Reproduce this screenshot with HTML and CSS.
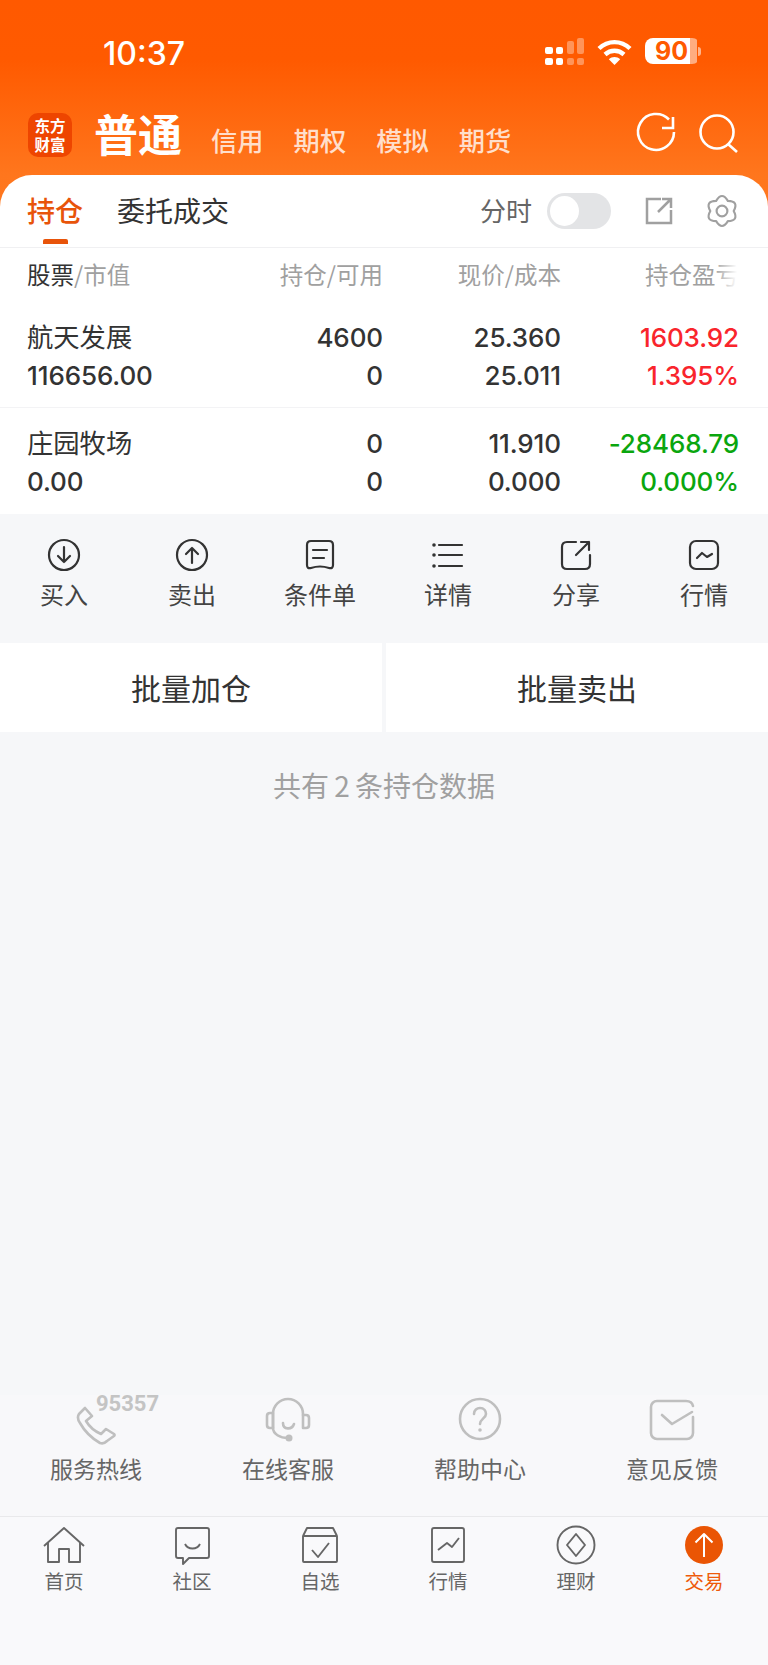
FILE: index.html
```html
<!DOCTYPE html>
<html lang="zh-CN">
<head>
<meta charset="utf-8">
<title>交易</title>
<link rel="stylesheet" href="styles.css">
</head>
<body>
<div class="screen">
  <header class="top">
    <div class="status">
      <span class="time">10:37</span>
      <div class="status-right">
        <svg class="signal" width="39" height="27" viewBox="0 0 39 27" fill="#fff">
          <rect x="0" y="9" width="8" height="7" rx="2"/><rect x="11" y="9" width="7" height="7" rx="2"/>
          <rect x="0" y="20" width="8" height="7" rx="2"/><rect x="11" y="20" width="7" height="7" rx="2"/>
          <g opacity=".35"><rect x="22" y="3" width="7" height="13" rx="2"/><rect x="32" y="0" width="7" height="16" rx="2"/>
          <rect x="22" y="20" width="7" height="7" rx="2"/><rect x="32" y="20" width="7" height="7" rx="2"/></g>
        </svg>
        <svg class="wifi" width="35" height="26" viewBox="0 0 35 26" fill="none" stroke="#fff" stroke-width="4.4">
          <path d="M2 9.5C11 1 24 1 33 9.5"/><path d="M8 15.5C13.500 10.500 21.500 10.500 27 15.500"/>
          <path d="M17.500 26L11.800 20.300C15 17.300 20 17.300 23.200 20.300Z" fill="#fff" stroke="none"/>
        </svg>
        <div class="battery"><span class="battery-num">90</span></div>
      </div>
    </div>
    <nav class="nav">
      <div class="logo">东方<br>财富</div>
      <div class="title">普通</div>
      <div class="nav-tabs"><span>信用</span><span>期权</span><span>模拟</span><span>期货</span></div>
      <div class="nav-icons">
        <svg width="44" height="44" viewBox="0 0 44 44" fill="none" stroke="#fff" stroke-width="2.6"><path d="M35 9.500A18 18 0 1 0 40 22"/><path d="M39 7V18H28"/></svg>
        <svg width="44" height="44" viewBox="0 0 44 44" fill="none" stroke="#fff" stroke-width="2.6"><circle cx="21" cy="22" r="16.500"/><path d="M32 34L41 42"/></svg>
      </div>
    </nav>
    <div class="tabs">
      <span class="tab tab-active">持仓</span>
      <span class="tab">委托成交</span>
      <span class="fenshi">分时</span>
      <div class="toggle"><span class="knob"></span></div>
      <svg class="tool-share" width="30" height="30" viewBox="0 0 30 30" fill="none" stroke="#a0a0a0" stroke-width="2.500"><path d="M17 3H3V27H27V14"/><path d="M14 16L27 3M18 3H27V12"/></svg>
      <svg class="tool-gear" width="36" height="36" viewBox="0 0 40 40" fill="none" stroke="#a0a0a0" stroke-width="2.400" stroke-linejoin="round"><path d="M26.500 8.700Q20 -2 13.500 8.700Q1 9 7 20Q1 31 13.500 31.300Q20 42 26.500 31.300Q39 31 33 20Q39 9 26.500 8.700Z"/><circle cx="20" cy="20" r="6"/></svg>
    </div>
  </header>

  <section class="table">
    <div class="grid head">
      <div><span class="dark">股票</span>/市值</div>
      <div class="r">持仓/可用</div>
      <div class="r">现价/成本</div>
      <div class="r">持仓盈亏</div>
      <span class="fade"></span>
    </div>
    <div class="grid row">
      <div class="name">航天发展</div><div class="r">4600</div><div class="r">25.360</div><div class="r red">1603.92</div>
      <div>116656.00</div><div class="r">0</div><div class="r">25.011</div><div class="r red">1.395%</div>
    </div>
    <div class="grid row">
      <div class="name">庄园牧场</div><div class="r">0</div><div class="r">11.910</div><div class="r green">-28468.79</div>
      <div>0.00</div><div class="r">0</div><div class="r">0.000</div><div class="r green">0.000%</div>
    </div>
  </section>

  <section class="actions">
    <div class="action">
      <svg width="40" height="36" viewBox="0 0 40 36"><circle cx="20" cy="18" r="15"/><path d="M20 10V25M14 19L20 25L26 19"/></svg>
      <span>买入</span>
    </div>
    <div class="action">
      <svg width="40" height="36" viewBox="0 0 40 36"><circle cx="20" cy="18" r="15"/><path d="M20 26V11M14 17L20 11L26 17"/></svg>
      <span>卖出</span>
    </div>
    <div class="action">
      <svg width="40" height="36" viewBox="0 0 40 36"><path d="M11 4H29Q33 4 33 8V28Q33 32 29 31Q20 28 11 31Q7 32 7 28V8Q7 4 11 4Z"/><path d="M13 13H27M13 21H24"/></svg>
      <span>条件单</span>
    </div>
    <div class="action">
      <svg width="40" height="36" viewBox="0 0 40 36"><path d="M11 8H34M11 18H34M11 29H34"/><circle class="dot" cx="6" cy="8" r="1.800"/><circle class="dot" cx="6" cy="18" r="1.800"/><circle class="dot" cx="6" cy="29" r="1.800"/></svg>
      <span>详情</span>
    </div>
    <div class="action">
      <svg width="40" height="36" viewBox="0 0 40 36"><path d="M20 5H11Q6 5 6 10V27Q6 32 11 32H29Q34 32 34 27V18"/><path d="M20 18L33 5M25 5H33V13"/></svg>
      <span>分享</span>
    </div>
    <div class="action">
      <svg width="40" height="36" viewBox="0 0 40 36"><rect x="6" y="4" width="28" height="28" rx="6"/><path d="M13 21L18 16L23 20L28 17"/></svg>
      <span>行情</span>
    </div>
  </section>

  <section class="buttons">
    <div class="btn">批量加仓</div>
    <div class="btn">批量卖出</div>
  </section>

  <div class="count">共有 2 条持仓数据</div>

  <section class="service">
    <div class="svc">
      <svg width="60" height="50" viewBox="0 0 60 50"><path d="M19 13L13 19C11 22 12 25 14 28C19 37 27 44 34 48C37 49 39 48 41 46L48 41Q49 40 48 39L40 34L35 39C28 36 23 31 20 26L26 21Z"/></svg>
      <span class="hotline">95357</span>
      <span>服务热线</span>
    </div>
    <div class="svc">
      <svg width="60" height="50" viewBox="0 0 60 50"><path d="M15 33V19A15 15 0 0 1 45 19V20"/><path d="M15 18H12Q9 18 9 21V30Q9 33 12 33H15ZM45 20H48Q51 20 51 23V30Q51 33 48 33H45Z"/><path d="M15 33C15 39 22 43 30 43"/><path d="M25 28C25 35 34 35 36 29"/><circle class="solid" cx="31" cy="43" r="3.500"/></svg>
      <span>在线客服</span>
    </div>
    <div class="svc">
      <svg width="60" height="50" viewBox="0 0 60 50"><circle cx="30" cy="24" r="20"/><path d="M24 19C24 15 27 13 30 13C34 13 36 16 36 19C36 23 30 24 30 29"/><circle class="solid" cx="30" cy="35" r="1.800"/></svg>
      <span>帮助中心</span>
    </div>
    <div class="svc">
      <svg width="60" height="50" viewBox="0 0 60 50"><path d="M51 22V38A6 6 0 0 1 45 44H15A6 6 0 0 1 9 38V12A6 6 0 0 1 15 6H44Q50 6 51 11"/><path d="M20 20L30 29L50 17"/></svg>
      <span>意见反馈</span>
    </div>
  </section>

  <footer class="tabbar">
    <div class="tb">
      <svg width="48" height="40" viewBox="0 0 48 40"><path d="M4 21L24 3L44 21"/><path d="M8 17V37H19V24H29V37H40V17"/></svg>
      <span>首页</span>
    </div>
    <div class="tb">
      <svg width="48" height="40" viewBox="0 0 48 40"><path d="M10 3H39Q41 3 41 5V31Q41 33 39 33H21L15 39V33H10Q8 33 8 31V5Q8 3 10 3Z"/><path d="M17 19C20 25 29 25 32 19"/></svg>
      <span>社区</span>
    </div>
    <div class="tb">
      <svg width="48" height="40" viewBox="0 0 48 40"><path d="M7 11H41V36Q41 37 40 37H8Q7 37 7 36ZM7 11L11 3H37L41 11"/><path d="M16 25L22 32L33 18"/></svg>
      <span>自选</span>
    </div>
    <div class="tb">
      <svg width="48" height="40" viewBox="0 0 48 40"><rect x="8" y="3" width="32" height="34" rx="2"/><path d="M14 25L23 18L28 22L35 13"/></svg>
      <span>行情</span>
    </div>
    <div class="tb">
      <svg width="48" height="40" viewBox="0 0 48 40"><circle cx="24" cy="20" r="18.500"/><path d="M24 9L33 20L24 31L15 20Z"/></svg>
      <span>理财</span>
    </div>
    <div class="tb tb-active">
      <svg width="48" height="40" viewBox="0 0 48 40"><circle class="trade-bg" cx="24" cy="20" r="19"/><path class="trade-arrow" d="M24 9V32M15.500 17.500L24 9L32.500 17.500"/></svg>
      <span>交易</span>
    </div>
  </footer>
</div>
</body>
</html>
```
FILE: styles.css
```css
* { box-sizing: border-box; }
html, body { margin: 0; padding: 0; }
body { font-family: "Inter", "Noto Sans CJK SC", sans-serif; color: #333; background: #f6f7f9; }
.screen { width: 768px; height: 1665px; display: flex; flex-direction: column; overflow: hidden; background: #f6f7f9; }

/* header */
.top { background: linear-gradient(#ff5900 0, #ff5a00 60px, #ff761d 175px, #ff7a20 247px); }
.status { height: 100px; display: flex; padding: 34px 68px 0 103px; color: #fff; }
.time { font-size: 32px; line-height: 40px; font-weight: 500; }
.status-right { margin-left: auto; display: flex; align-items: flex-start; gap: 13px; padding-top: 4px; }
.wifi { margin-top: 1px; }
.battery { width: 55px; height: 26px; position: relative; border-radius: 8px; background: linear-gradient(90deg, #fff 0, #fff 45px, rgba(255,255,255,.5) 45px, rgba(255,255,255,.5) 52px, transparent 52px); color: #ff5a00; text-align: left; padding-left: 10px; }
.battery::after { content: ""; position: absolute; left: 53px; top: 9px; width: 3px; height: 9px; border-radius: 0 3px 3px 0; background: rgba(255,255,255,.55); }
.battery-num { font-size: 25px; line-height: 26px; font-weight: 700; display: block; }

.nav { height: 75px; display: flex; align-items: flex-start; padding: 0 28px; }
.logo { width: 44px; height: 44px; margin-top: 13px; border-radius: 10px; background: #ee4500; color: #fff; font-family: "Noto Sans CJK SC", sans-serif; font-weight: 700; font-size: 15.500px; line-height: 19px; text-align: center; padding-top: 3px; }
.title { margin: 9px 0 0 22px; color: #fff; font-family: "Noto Sans CJK SC", sans-serif; font-size: 44px; line-height: 48px; font-weight: 700; }
.nav-tabs { display: flex; gap: 30px; margin: 24px 0 0 29px; color: rgba(255,255,255,.78); font-family: "Noto Sans CJK SC", sans-serif; font-size: 26.300px; line-height: 32px; font-weight: 500; }
.nav-icons { margin: 10px 0 0 auto; display: flex; gap: 18px; }

.tabs { height: 72px; background: #fff; border-radius: 32px 32px 0 0; display: flex; align-items: center; padding: 0 28px 0 27px; font-family: "Noto Sans CJK SC", sans-serif; }
.tab { font-size: 28px; line-height: 34px; margin-right: 34px; margin-bottom: 2px; position: relative; color: #333; }
.tab-active { color: #e8540a; font-weight: 500; }
.tab-active::after { content: ""; position: absolute; left: 16px; bottom: -17px; width: 25px; height: 5px; border-radius: 2px 2px 0 0; background: #e8540a; }
.fenshi { margin-left: auto; font-size: 26px; line-height: 34px; margin-bottom: 2px; color: #666; }
.toggle { width: 64px; height: 36px; margin-left: 15px; border-radius: 18px; background: #e3e4e6; display: flex; align-items: center; padding: 0 3px; }
.knob { width: 29px; height: 30px; border-radius: 50%; background: #fff; }
.tool-share { margin-left: 33px; }
.tool-gear { margin-left: 30px; }

/* table */
.table { background: #fff; border-top: 1px solid #f0f0f2; }
.grid { display: grid; grid-template-columns: 176px 180px 178px 178px; padding: 0 29px 0 27px; }
.r { text-align: right; }
.head { height: 57px; font-family: "Noto Sans CJK SC", sans-serif; font-size: 23.500px; line-height: 53px; color: #a0a0a0; position: relative; }
.dark { color: #333; }
.fade { position: absolute; right: 27px; top: 8px; width: 26px; height: 40px; background: linear-gradient(90deg, rgba(255,255,255,0), #fff 85%); }
.row { font-family: "Inter", "Noto Sans CJK SC", sans-serif; font-size: 26px; line-height: 38px; font-weight: 500; padding: 14px 28px 12px 27px; border-bottom: 1px solid #f3f3f5; letter-spacing: -.1px; }
.row:last-child { border-bottom: 0; padding: 17px 28px 13px 27px; }
.name { font-family: "Noto Sans CJK SC", sans-serif; font-size: 26.300px; font-weight: 400; margin-top: -2px; letter-spacing: 0; }
.red { color: #f9252c; }
.green { color: #0aa60e; }

/* actions */
.actions { height: 129px; display: grid; grid-template-columns: repeat(6, 1fr); padding-top: 23px; }
.action { display: flex; flex-direction: column; align-items: center; font-family: "Noto Sans CJK SC", sans-serif; font-size: 24px; line-height: 30px; gap: 6px; color: #444; }
.action svg { fill: none; stroke: #333; stroke-width: 2.200; stroke-linejoin: round; stroke-linecap: round; }
.action .dot { fill: #333; stroke: none; }

/* buttons */
.buttons { height: 89px; display: flex; gap: 4px; }
.btn { flex: 1; background: #fff; display: flex; align-items: center; justify-content: center; padding-bottom: 2px; font-family: "Noto Sans CJK SC", sans-serif; font-size: 30px; color: #333; }

.count { flex: 1; padding-top: 35px; text-align: center; word-spacing: -1px; font-family: "Noto Sans CJK SC", sans-serif; font-size: 28px; line-height: 36px; color: #a0a0a0; }

/* service */
.service { height: 121px; display: grid; grid-template-columns: repeat(4, 1fr); background: #f8f8fa; }
.svc { position: relative; display: flex; flex-direction: column; align-items: center; gap: 8px; font-family: "Noto Sans CJK SC", sans-serif; font-size: 23px; line-height: 30px; color: #666; }
.svc svg { fill: none; stroke: #bfbfbf; stroke-width: 2.600; stroke-linejoin: round; stroke-linecap: round; }
.svc .solid { fill: #bfbfbf; stroke: none; }
.hotline { position: absolute; left: 96px; top: -4px; font-family: "Roboto", sans-serif; font-weight: 700; font-size: 22px; line-height: 26px; color: #c4c4c4; }

/* tab bar */
.tabbar { height: 149px; border-top: 1px solid #e9e9eb; background: #f9f9fb; display: grid; grid-template-columns: repeat(6, 1fr); padding-top: 8px; align-content: start; }
.tb { display: flex; flex-direction: column; align-items: center; font-family: "Noto Sans CJK SC", sans-serif; font-size: 19.500px; line-height: 26px; color: #666; gap: 3px; }
.tb svg { fill: none; stroke: #666; stroke-width: 1.900; stroke-linejoin: round; }
.tb-active { color: #ee5a0a; }
.tb .trade-bg { fill: #ea5504; stroke: none; }
.tb .trade-arrow { stroke: #fff; stroke-width: 2; }
```
